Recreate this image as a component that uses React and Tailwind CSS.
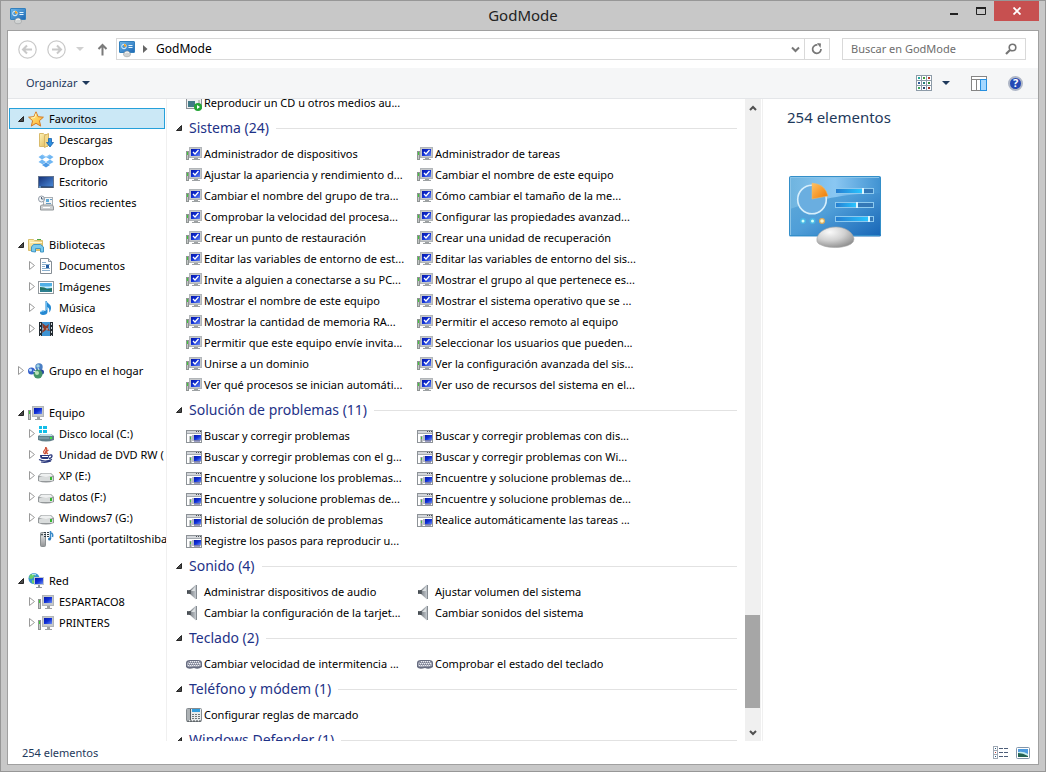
import React from "react";

function ControlPanelIcon() {
  return (
    <svg width="18" height="18" viewBox="0 0 18 18" aria-hidden="true">
      <defs>
        <linearGradient id="cp" x1="0" y1="0" x2="1" y2="1">
          <stop offset="0" stopColor="#6db7ea" />
          <stop offset="1" stopColor="#1d68b4" />
        </linearGradient>
      </defs>
      <rect x="1.5" y="1.5" width="15" height="11" rx="0.5" fill="url(#cp)" stroke="#3380bd" />
      <circle cx="6" cy="6.5" r="2.3" fill="#4e9bd8" stroke="#e3f3fd" />
      <path d="M6 6.5V4a2.500 2.500 0 0 1 2.500 2.500z" fill="#f5a11f" />
      <path d="M10.500 5.500h4M10.500 7.500h4" stroke="#e3f5ff" />
      <path d="M5.500 14.500c0-4.500 7-4.500 7 0c0 3-7 3-7 0z" fill="#cfd2d2" stroke="#989c9e" strokeWidth=".6" />
      <path d="M7 13.200c1-1.500 3-1.500 4-.5" stroke="#fff" fill="none" />
    </svg>
  );
}

function Svg({ children }) {
  return (
    <svg width="16" height="16" viewBox="0 0 16 16" className="shrink-0" aria-hidden="true">
      <defs>
        <linearGradient id="screen" x1="0" y1="0" x2="1" y2="1">
          <stop offset="0" stopColor="#0718a8" />
          <stop offset=".5" stopColor="#1030d8" />
          <stop offset="1" stopColor="#6d8cf0" />
        </linearGradient>
        <linearGradient id="metal" x1="0" y1="0" x2="0" y2="1">
          <stop offset="0" stopColor="#f1f1f1" />
          <stop offset="1" stopColor="#929496" />
        </linearGradient>
        <linearGradient id="cone" x1="0" y1="0" x2="1" y2="0">
          <stop offset="0" stopColor="#555b61" />
          <stop offset="1" stopColor="#c5cacf" />
        </linearGradient>
        <linearGradient id="folder" x1="0" y1="0" x2="1" y2="1">
          <stop offset="0" stopColor="#fff3b8" />
          <stop offset="1" stopColor="#dfb755" />
        </linearGradient>
        <linearGradient id="starfill" x1="0" y1="0" x2="1" y2="1">
          <stop offset="0" stopColor="#fff799" />
          <stop offset="1" stopColor="#ffab25" />
        </linearGradient>
        <linearGradient id="desk" x1="0" y1="0" x2="1" y2="1">
          <stop offset="0" stopColor="#142f76" />
          <stop offset="1" stopColor="#4c8edd" />
        </linearGradient>
      </defs>
      {children}
    </svg>
  );
}

function Computer() {
  return (
    <Svg>
      <rect x=".5" y="5.500" width="2" height="9" fill="#c3c7c6" stroke="#8f9493" />
      <path d="M1.500 6v3" stroke="#42c93c" />
      <rect x="4.500" y="1.500" width="11" height="10" fill="#c6c9cb" stroke="#b1b5b8" />
      <rect x="6" y="3" width="8" height="6" fill="url(#screen)" />
      <path d="M9 12h3v2h2v1H7v-1h2z" fill="#9da1a3" />
    </Svg>
  );
}

function SystemIcon() {
  return (
    <Svg>
      <rect x=".5" y="5.500" width="2" height="8" fill="#c3c7c6" stroke="#8f9493" />
      <path d="M1.500 6v3" stroke="#42c93c" />
      <rect x="3.500" y="1.500" width="12" height="10" fill="#c6c9cb" stroke="#b1b5b8" />
      <rect x="5" y="3" width="9" height="7" fill="url(#screen)" />
      <path d="M7 6l2 2 3.500-4" stroke="#fff" strokeWidth="1.300" fill="none" />
      <path d="M8 12h4v1h2v1H6v-1h2z" fill="#9da1a3" />
    </Svg>
  );
}

function TroubleIcon() {
  return (
    <Svg>
      <rect x=".5" y="2.500" width="15" height="12" fill="#fff" stroke="#8d9297" />
      <path d="M1 4h14" stroke="#d3d6da" strokeWidth="2" />
      <path d="M1 5.500h14" stroke="#a5aab0" />
      <path d="M10 3.500h1M12 3.500h1M14 3.500h1" stroke="#4b5057" />
      <path d="M4.500 8v6" stroke="#8d9395" strokeWidth="2" />
      <path d="M4.500 9v2" stroke="#43ba3f" />
      <rect x="6" y="7" width="9" height="6" fill="#b5bac5" />
      <rect x="8" y="7" width="7" height="5" fill="url(#screen)" />
      <path d="M8 13h6" stroke="#3b418d" />
    </Svg>
  );
}

function AutoplayIcon() {
  return (
    <Svg>
      <rect x=".5" y="1.500" width="15" height="12" fill="#eef0f1" stroke="#8d9297" />
      <rect x="2" y="6" width="7" height="6" fill="#417987" />
      <path d="M12 6h2M12 8h2" stroke="#999" />
      <circle cx="12" cy="12" r="4" fill="#24a536" />
      <path d="M11 10l3 2-3 2z" fill="#fff" />
    </Svg>
  );
}

function SpeakerIcon() {
  return (
    <Svg>
      <path d="M1 6h3l6-5.500v15L4 10H1z" fill="url(#cone)" />
      <path d="M10.500 1v14" stroke="#858b91" />
      <path d="M2 7v2M4 6v4" stroke="#30363c" />
      <path d="M5 7l4-4v4z" fill="#dce0e2" />
    </Svg>
  );
}

function KeyboardIcon() {
  return (
    <Svg>
      <path d="M0 7q0-3 4-3h8q4 0 4 3v4q-4 3-8 1q-6 2-8-1z" fill="#666c80" />
      <path d="M1 7q1-2 4-2h6q3 0 4 2v3q-4 1-7 .5q-5 1-7-.5z" fill="#a6a9b7" />
      <path d="M4 5.500h9M3 7.500h11M2 9.500h12" stroke="#eceef3" strokeDasharray="1 1" />
      <path d="M3 6.500h10M2 8.500h12" stroke="#777c90" strokeDasharray="1 1" />
    </Svg>
  );
}

function PhoneIcon() {
  return (
    <Svg>
      <rect x=".5" y="1.500" width="15" height="13" rx="1" fill="#e8ebec" stroke="#858b8f" />
      <rect x="1" y="2" width="3" height="11" fill="#adb2b5" />
      <path d="M4.500 2v11" stroke="#555b60" />
      <rect x="6" y="2" width="8" height="3" fill="#319ddd" />
      <path d="M6 7.500h8M6 9.500h8M6 11.500h8" stroke="#6f777c" strokeDasharray="2 1" />
      <path d="M1 14h14" stroke="#3e4549" strokeDasharray="2 1" />
    </Svg>
  );
}

function Star() {
  return (
    <Svg>
      <path d="M8 .8l2.100 4.900 5.300.5-4 3.500 1.300 5.400L8 12.300l-4.700 2.800 1.300-5.400-4-3.500 5.300-.5z" fill="url(#starfill)" stroke="#d47a25" strokeLinejoin="round" />
      <path d="M8 2.500L6.700 6.500l-3.500.5" stroke="#fff8bc" fill="none" />
    </Svg>
  );
}

function Downloads() {
  return (
    <Svg>
      <path d="M1.500 1.500h4l1 1h3v12h-8z" fill="url(#folder)" stroke="#d9bb6c" />
      <path d="M6.500 3.500l4-2v12l-4 2z" fill="#f3d98a" stroke="#d6b565" />
      <path d="M10.500 6.500h3v4h2l-3.500 4.500-3.500-4.500h2z" fill="#2c8fe0" stroke="#1861ad" strokeWidth=".8" />
    </Svg>
  );
}

function Dropbox() {
  return (
    <Svg>
      <path d="M4.500 1.500L8 4 4 6.500.5 4zM11.500 1.500L15.500 4 12 6.500 8 4zM4 6.500L8 9l-3.500 2.300L.5 9zM12 6.500L15.500 9l-4 2.300L8 9z" fill="#6fb6f3" />
      <path d="M4.500 2.500l3.500 1.500M11.500 2.500L8 4" stroke="#9bd1fb" />
      <path d="M4 12l4-2.500 4 2.500-4 2.500z" fill="#4c9ae5" />
    </Svg>
  );
}

function Desktop() {
  return (
    <Svg>
      <rect x=".5" y="2.500" width="15" height="11" fill="url(#desk)" stroke="#63748f" />
      <path d="M1 13h14" stroke="#22354f" />
      <path d="M1 13h2" stroke="#80c9ff" />
    </Svg>
  );
}

function Recent() {
  return (
    <Svg>
      <rect x="5.500" y="2.500" width="9" height="9" fill="#f3f5f6" stroke="#a9afb4" />
      <rect x="8" y="4" width="3" height="3" fill="#5aaada" />
      <path d="M8 8.500h5M12 4.500h2" stroke="#669bc0" />
      <path d="M2.500 11l1-1h11l1 2v3h-13z" fill="#cdd0d2" stroke="#92979a" />
      <path d="M5 12.500h7" stroke="#fff" />
      <circle cx="3.500" cy="4" r="3" fill="#f2f4f6" stroke="#949da7" />
      <path d="M3.500 2v2h2" stroke="#536578" fill="none" />
    </Svg>
  );
}

function Libraries() {
  return (
    <Svg>
      <path d="M.5 2.500h5l1 1h8v10h-14z" fill="url(#folder)" stroke="#d8bd6b" />
      <path d="M9 2.500h4" stroke="#52a745" />
      <path d="M2 5.500h12" stroke="#fff7d1" />
      <path d="M3.500 14.500V10l2-2.500h7l3 2.500v5h-3v-3.500h-5v3.500z" fill="#79c9ed" stroke="#4096c4" />
    </Svg>
  );
}

function Documents() {
  return (
    <Svg>
      <path d="M2.500.5h8l3 3v12h-11z" fill="#fff" stroke="#858d94" />
      <path d="M10.500.5v3h3" fill="#dfe4e9" stroke="#8b949b" />
      <path d="M4 4.500h4M4 6.500h8M4 10.500h8M4 12.500h8M4 8.500h3" stroke="#8ab0ce" />
      <rect x="8" y="7" width="3" height="3" fill="#235aa0" />
    </Svg>
  );
}

function Pictures() {
  return (
    <Svg>
      <rect x=".5" y="2.500" width="15" height="12" fill="#fff" stroke="#92999e" />
      <rect x="2" y="4" width="12" height="9" fill="#52b0e6" />
      <path d="M2 7q6 1 12 0v2H2z" fill="#c9effb" />
      <path d="M2 8q5 0 7 2l5-1v4H2z" fill="#267260" />
      <path d="M2 11q6-1 12 1v1H2z" fill="#2c7f8f" />
    </Svg>
  );
}

function Music() {
  return (
    <Svg>
      <path d="M8.500 1c1 3 5 3 4.500 7.500-.2 2-1 3-2 4 1-3-.5-5-1.500-5.500v5c0 2-2 3-4.500 3-4 0-4-4 0-4.500q1.500-.2 2.500.5V1z" fill="#2589d2" />
      <path d="M3 12q1-1.500 3-1" stroke="#8bd3ff" fill="none" />
      <path d="M8.500 2v8" stroke="#69bdf2" />
    </Svg>
  );
}

function Videos() {
  return (
    <Svg>
      <rect x="1" y="1" width="14" height="14" fill="#222a31" />
      <rect x="4" y="1" width="8" height="14" fill="#3e93d2" />
      <path d="M4 2l4 3 3-2-1 4 2 3-4-1-4 3 1-5z" fill="#8d3b29" />
      <path d="M4 8h8M2.500 2v13M13.500 2v13" stroke="#ced5d9" strokeDasharray="2 2" />
    </Svg>
  );
}

function Homegroup() {
  return (
    <Svg>
      <circle cx="11" cy="4" r="3.700" fill="#4a7fc4" />
      <circle cx="3.500" cy="8" r="3.500" fill="#355fca" />
      <circle cx="13.500" cy="9" r="2.500" fill="#294ba0" />
      <circle cx="10" cy="11" r="4.500" fill="#459568" />
      <circle cx="10" cy="3" r="1.700" fill="#9fd5e5" />
      <circle cx="2.500" cy="7" r="1.500" fill="#bddfff" />
      <circle cx="9" cy="10" r="2" fill="#bbe3b6" />
      <path d="M5 8l3 1M10 5l1 2" stroke="#dae8f0" />
    </Svg>
  );
}

function Drive() {
  return (
    <Svg>
      <path d="M3 5h10l3 3v5q-8 3-16 0V8z" fill="#939799" />
      <path d="M3.500 5.500h9l2.500 2.500q-7 2-14 0z" fill="#eef0f0" />
      <rect x="1" y="9" width="14" height="4" rx="1" fill="#d9dcdc" />
      <rect x="12" y="9" width="2" height="3" fill="#35b831" />
    </Svg>
  );
}

function SystemDrive() {
  return (
    <Svg>
      <path d="M3 8h10l3 2v4q-8 3-16 0v-4z" fill="#617f8a" />
      <path d="M3 8h10l2 2H1z" fill="#bfdae3" />
      <path d="M1 12h10" stroke="#94b2bd" />
      <path d="M1 0h3v3H1zM5 0h4v3H5zM1 4h3v3H1zM5 4h4v3H5z" fill="#13bde8" />
      <rect x="12" y="11" width="2" height="2" fill="#3ce542" />
    </Svg>
  );
}

function Java() {
  return (
    <Svg>
      <path d="M7 7C3 4 9 3 7.500 0c4 3-2 4 .5 7M10 7C7 5 9 4 10.500 3" stroke="#cd5036" strokeWidth="1.200" fill="none" />
      <path d="M2 8h9c0 4-1 4-2 4H5C3 12 2 11 2 8z" fill="#29377c" />
      <path d="M11 8.500c4-2 4 2 0 3" fill="none" stroke="#29377c" strokeWidth="1.300" />
      <path d="M4 9.500h6" stroke="#fff" />
      <path d="M1 12.500q6 3 13 0M3 15q5 1 10-1" fill="none" stroke="#29377c" strokeWidth="1.200" />
    </Svg>
  );
}

function MediaDevice() {
  return (
    <Svg>
      <rect x="2.500" y="1.500" width="5" height="14" rx="1" fill="url(#metal)" stroke="#8b9092" />
      <circle cx="4" cy="3.500" r="1" fill="#3f494d" />
      <path d="M6 1.500h6M6 3.500h6M6 5.500h6" stroke="#303b44" strokeDasharray="2 1" />
      <path d="M12.500 0v8M12.500 2q3 0 2 4" stroke="#388ac9" strokeWidth="1.500" fill="none" />
      <circle cx="11.500" cy="8" r="1.500" fill="#2878b5" />
    </Svg>
  );
}

function Network() {
  return (
    <Svg>
      <circle cx="6" cy="5.500" r="5.500" fill="#3794d0" />
      <path d="M2 2q3-2 5 0L5 5 3 6 1 5zM4 7l4 1-1 3-3-1z" fill="#6ad066" />
      <path d="M4 2q2-2 4 0" stroke="#cdf2fb" fill="none" />
      <rect x="6" y="4" width="10" height="8" fill="#c0c7ce" />
      <rect x="7" y="5" width="8" height="6" fill="url(#screen)" />
      <path d="M10 12h2v2h2v1H8v-1h2z" fill="#8f979d" />
    </Svg>
  );
}

const tree = [
  {
    label: "Favoritos", icon: Star, open: true, selected: true,
    children: [
      { label: "Descargas", icon: Downloads },
      { label: "Dropbox", icon: Dropbox },
      { label: "Escritorio", icon: Desktop },
      { label: "Sitios recientes", icon: Recent },
    ],
  },
  {
    label: "Bibliotecas", icon: Libraries, open: true,
    children: [
      { label: "Documentos", icon: Documents, more: true },
      { label: "Imágenes", icon: Pictures, more: true },
      { label: "Música", icon: Music, more: true },
      { label: "Vídeos", icon: Videos, more: true },
    ],
  },
  { label: "Grupo en el hogar", icon: Homegroup, children: [] },
  {
    label: "Equipo", icon: Computer, open: true,
    children: [
      { label: "Disco local (C:)", icon: SystemDrive, more: true },
      { label: "Unidad de DVD RW (", icon: Java, more: true },
      { label: "XP (E:)", icon: Drive, more: true },
      { label: "datos (F:)", icon: Drive, more: true },
      { label: "Windows7 (G:)", icon: Drive, more: true },
      { label: "Santi (portatiltoshiba", icon: MediaDevice },
    ],
  },
  {
    label: "Red", icon: Network, open: true,
    children: [
      { label: "ESPARTACO8", icon: Computer, more: true },
      { label: "PRINTERS", icon: Computer, more: true },
    ],
  },
];

const groups = [
  {
    title: "Sistema (24)", icon: SystemIcon,
    items: [
      "Administrador de dispositivos", "Administrador de tareas",
      "Ajustar la apariencia y rendimiento d...", "Cambiar el nombre de este equipo",
      "Cambiar el nombre del grupo de tra...", "Cómo cambiar el tamaño de la me...",
      "Comprobar la velocidad del procesa...", "Configurar las propiedades avanzad...",
      "Crear un punto de restauración", "Crear una unidad de recuperación",
      "Editar las variables de entorno de est...", "Editar las variables de entorno del sis...",
      "Invite a alguien a conectarse a su PC...", "Mostrar el grupo al que pertenece es...",
      "Mostrar el nombre de este equipo", "Mostrar el sistema operativo que se ...",
      "Mostrar la cantidad de memoria RA...", "Permitir el acceso remoto al equipo",
      "Permitir que este equipo envíe invita...", "Seleccionar los usuarios que pueden...",
      "Unirse a un dominio", "Ver la configuración avanzada del sis...",
      "Ver qué procesos se inician automáti...", "Ver uso de recursos del sistema en el...",
    ],
  },
  {
    title: "Solución de problemas (11)", icon: TroubleIcon,
    items: [
      "Buscar y corregir problemas", "Buscar y corregir problemas con dis...",
      "Buscar y corregir problemas con el g...", "Buscar y corregir problemas con Wi...",
      "Encuentre y solucione los problemas...", "Encuentre y solucione problemas de...",
      "Encuentre y solucione problemas de...", "Encuentre y solucione problemas de...",
      "Historial de solución de problemas", "Realice automáticamente las tareas ...",
      "Registre los pasos para reproducir u...",
    ],
  },
  {
    title: "Sonido (4)", icon: SpeakerIcon,
    items: [
      "Administrar dispositivos de audio", "Ajustar volumen del sistema",
      "Cambiar la configuración de la tarjet...", "Cambiar sonidos del sistema",
    ],
  },
  {
    title: "Teclado (2)", icon: KeyboardIcon,
    items: ["Cambiar velocidad de intermitencia ...", "Comprobar el estado del teclado"],
  },
  { title: "Teléfono y módem (1)", icon: PhoneIcon, items: ["Configurar reglas de marcado"] },
  { title: "Windows Defender (1)", icon: SystemIcon, items: [] },
];

function OpenArrow() {
  return (
    <svg width="6" height="6" viewBox="0 0 6 6" className="shrink-0" aria-hidden="true">
      <path d="M5.500.5v5h-5z" fill="#4b4b4b" stroke="#262626" />
    </svg>
  );
}

function ClosedArrow() {
  return (
    <svg width="6" height="9" viewBox="0 0 6 9" className="shrink-0" aria-hidden="true">
      <path d="M.5.500l5 4-5 4z" fill="#fff" stroke="#9a9a9a" />
    </svg>
  );
}

function Sidebar() {
  return (
    <nav aria-label="Panel de navegación" className="w-[159px] shrink-0 overflow-hidden border-r border-[#f0f0f0] pt-[9px] pr-px pl-px">
      <ul className="flex flex-col gap-[21px]">
        {tree.map(({ label, icon: Icon, open, selected, children }) => (
          <li key={label}>
            <button
              className={
                "flex h-[21px] w-full items-center whitespace-nowrap border pl-2 " +
                (selected ? "border-[#26a0da] bg-[#cbe8f6]" : "border-transparent")
              }
            >
              <span className="flex w-[10px] shrink-0">{open ? <OpenArrow /> : <ClosedArrow />}</span>
              <Icon />
              <span className="pl-[5px]">{label}</span>
            </button>
            <ul>
              {children.map(({ label: name, icon: Sub, more }) => (
                <li key={name}>
                  <button className="flex h-[21px] w-full items-center whitespace-nowrap pl-5">
                    <span className="flex w-[9px] shrink-0">{more && <ClosedArrow />}</span>
                    <Sub />
                    <span className="pl-[5px]">{name}</span>
                  </button>
                </li>
              ))}
            </ul>
          </li>
        ))}
      </ul>
    </nav>
  );
}

function Items({ items, icon: Icon }) {
  return (
    <ul className="grid grid-cols-[231px_231px] pl-[19px]">
      {items.map((item, i) => (
        <li key={i}>
          <button className="flex h-[21px] items-center gap-[2px] whitespace-nowrap">
            <Icon />
            <span>{item}</span>
          </button>
        </li>
      ))}
    </ul>
  );
}

function Scrollbar() {
  return (
    <div className="flex w-4 shrink-0 flex-col bg-[#f0f0f0]">
      <button aria-label="Subir" className="flex h-[17px] shrink-0 items-center justify-center">
        <svg width="8" height="6" viewBox="0 0 8 6"><path d="M1 5l3-3 3 3" fill="none" stroke="#505050" strokeWidth="2" /></svg>
      </button>
      <div className="flex-1" />
      <div className="mr-px h-[93px] shrink-0 bg-[#a6a6a6]" />
      <div className="h-4 shrink-0" />
      <button aria-label="Bajar" className="flex h-[17px] shrink-0 items-center justify-center">
        <svg width="8" height="6" viewBox="0 0 8 6"><path d="M1 1l3 3 3-3" fill="none" stroke="#505050" strokeWidth="2" /></svg>
      </button>
    </div>
  );
}

function LargeControlPanel() {
  return (
    <svg width="96" height="76" viewBox="0 0 96 76" role="img" aria-label="GodMode">
      <defs>
        <linearGradient id="panel" x1="0" y1="0" x2="1" y2="1">
          <stop offset="0" stopColor="#64add9" />
          <stop offset=".5" stopColor="#4f9ed8" />
          <stop offset="1" stopColor="#1765b6" />
        </linearGradient>
        <linearGradient id="glare" x1="0" y1="0" x2="1" y2="0">
          <stop offset="0" stopColor="#6fb4df" />
          <stop offset=".5" stopColor="#8ac7f2" />
          <stop offset="1" stopColor="#4193d2" />
        </linearGradient>
        <linearGradient id="bar" x1="0" y1="0" x2="1" y2="0">
          <stop offset="0" stopColor="#267ed1" />
          <stop offset="1" stopColor="#28c4ff" />
        </linearGradient>
        <linearGradient id="wedge" x1="0" y1="0" x2="1" y2="1">
          <stop offset="0" stopColor="#ffc263" />
          <stop offset="1" stopColor="#ed7800" />
        </linearGradient>
        <radialGradient id="ball" cx=".35" cy=".25" r=".8">
          <stop offset="0" stopColor="#fafafa" />
          <stop offset=".5" stopColor="#d2d2d2" />
          <stop offset="1" stopColor="#8d8d8d" />
        </radialGradient>
      </defs>
      <rect x="2" y="2.500" width="92" height="60" rx="1.500" fill="url(#panel)" />
      <path d="M3 3h90v16C60 20 40 23 3 35z" fill="url(#glare)" />
      <rect x="2.500" y="2.500" width="91" height="59" rx="1" fill="none" stroke="#348fc9" />
      <path d="M3.500 61V3.500H92" fill="none" stroke="#8ac4e8" />
      <circle cx="25" cy="25.500" r="14.300" fill="#6aaee0" stroke="#d7effc" strokeWidth="1.600" />
      <path d="M25 25V9q13 1 16 13z" fill="url(#wedge)" stroke="#e9bd77" strokeWidth=".5" />
      {[[14, 26, 27], [28, 20, 21], [42, 32, 33]].map(([y, width, mark]) => (
        <g key={y}>
          <rect x="48.500" y={y + 0.5} width="38" height="5" fill="#3478b7" stroke="#8dc9ee" />
          <rect x="49" y={y + 1} width={width} height="4" fill="url(#bar)" />
          <rect x={48 + mark} y={y} width="2" height="6" fill="#dcf6ff" />
        </g>
      ))}
      <circle cx="16" cy="47" r="3" fill="#48b7e5" /><circle cx="16" cy="47" r="1.500" fill="#d2fff8" />
      <circle cx="25.500" cy="47" r="3" fill="#48b7e5" /><circle cx="25.500" cy="47" r="1.500" fill="#d2fff8" />
      <circle cx="35" cy="47" r="3" fill="#e0ab58" /><circle cx="35" cy="47" r="1.800" fill="#fff5c7" />
      <path d="M30 64C32 57 40 53 49 53s17 5 18 12q0 6-12 8q-14 2-23-3q-3-2-2-6z" fill="url(#ball)" stroke="#aaa" strokeWidth=".6" />
    </svg>
  );
}

export default function App() {
  return (
    <div className="flex h-screen flex-col overflow-hidden border border-[#979797] bg-[#c8c8c8] px-1.5 pb-1.5 font-['Noto_Sans','Open_Sans',sans-serif] text-[11px] leading-4 text-black">
      <header className="grid h-[29px] shrink-0 grid-cols-[1fr_auto_1fr] items-center">
        <span className="pl-0.5"><ControlPanelIcon /></span>
        <h1 className="pb-0.5 text-[15px] leading-5 text-[#222]">GodMode</h1>
        <div className="flex h-full items-start justify-end">
          <button aria-label="Minimizar" className="flex h-5 w-[26px] items-center justify-center">
            <svg width="8" height="10" viewBox="0 0 8 10"><path d="M0 8h8" stroke="#222" strokeWidth="2" /></svg>
          </button>
          <button aria-label="Maximizar" className="flex h-5 w-[27px] items-center justify-center">
            <svg width="10" height="8" viewBox="0 0 10 8"><path d="M.5 1v6.500h9V1z" fill="none" stroke="#222" /><path d="M0 1h10" stroke="#222" strokeWidth="2" /></svg>
          </button>
          <button aria-label="Cerrar" className="flex h-5 w-[45px] items-center justify-center bg-[#c75050]">
            <svg width="8" height="8" viewBox="0 0 8 8"><path d="M.5.5l7 7M7.500.5l-7 7" stroke="#fff" strokeWidth="1.800" /></svg>
          </button>
        </div>
      </header>

      <div className="flex min-h-0 flex-1 flex-col border border-[#a0a0a0] bg-white">
        <div className="flex h-[37px] shrink-0 items-center pr-3 pb-px pl-[10px]">
          <button aria-label="Atrás">
            <svg width="19" height="19" viewBox="0 0 19 19" fill="none" stroke="#c9c9c9"><circle cx="9.500" cy="9.500" r="8.700" strokeWidth="1.200" /><path d="M14 9.500H5.500M9 5.500l-4 4 4 4" strokeWidth="2" /></svg>
          </button>
          <button aria-label="Adelante" className="ml-[10px]">
            <svg width="19" height="19" viewBox="0 0 19 19" fill="none" stroke="#c9c9c9"><circle cx="9.500" cy="9.500" r="8.700" strokeWidth="1.200" /><path d="M5 9.500h8.500M10 5.500l4 4-4 4" strokeWidth="2" /></svg>
          </button>
          <button aria-label="Ubicaciones recientes" className="ml-[10px]">
            <svg width="8" height="4" viewBox="0 0 8 4"><path d="M0 0h8L4 4z" fill="#d0d0d0" /></svg>
          </button>
          <button aria-label="Subir un nivel" className="mr-2 ml-[13px]">
            <svg width="11" height="13" viewBox="0 0 11 13"><path d="M5.500 12.500V2M1.500 6l4-4 4 4" stroke="#7a7a7a" strokeWidth="2" fill="none" /></svg>
          </button>
          <div className="flex h-[22px] flex-1 items-center border border-[#d9d9d9]">
            <span className="pl-px"><ControlPanelIcon /></span>
            <svg width="5" height="8" viewBox="0 0 5 8" className="ml-[7px]" aria-hidden="true"><path d="M0 0l4.500 4L0 8z" fill="#666" /></svg>
            <button className="flex-1 pl-2 text-left text-[12px]">GodMode</button>
            <button aria-label="Ubicaciones anteriores" className="mr-1">
              <svg width="9" height="7" viewBox="0 0 9 7"><path d="M1 1.500l3.500 3.500L8 1.500" fill="none" stroke="#777" strokeWidth="2" /></svg>
            </button>
            <button aria-label="Actualizar" className="flex h-full w-[25px] items-center justify-center border-l border-[#d9d9d9]">
              <svg width="12" height="12" viewBox="0 0 12 12"><path d="M6.500 2A4.200 4.200 0 1 0 10 6" fill="none" stroke="#777" strokeWidth="1.700" /><path d="M6 0l4 .5L9.500 5z" fill="#777" /></svg>
            </button>
          </div>
          <label className="ml-3 flex h-[22px] w-[184px] items-center border border-[#d9d9d9] px-2">
            <input type="search" aria-label="Buscar en GodMode" placeholder="Buscar en GodMode" className="min-w-0 flex-1 bg-transparent text-[11px] outline-none placeholder:text-[#6d6d6d]" />
            <svg width="12" height="12" viewBox="0 0 12 12" aria-hidden="true"><circle cx="7.500" cy="4.500" r="3.300" fill="none" stroke="#747474" strokeWidth="1.600" /><path d="M5 7L1 11" stroke="#747474" strokeWidth="2.200" /></svg>
          </label>
        </div>

        <div className="flex h-[31px] shrink-0 items-center border-b border-[#e4e6e9] bg-[#f5f6f7] pr-[15px] pl-[18px]">
          <button className="flex items-center gap-[5px] text-[#1e395b]">
            Organizar
            <svg width="8" height="4" viewBox="0 0 8 4" aria-hidden="true"><path d="M0 0h8L4 4z" fill="#1e395b" /></svg>
          </button>
          <div className="flex-1" />
          <button aria-label="Cambiar la vista">
            <svg width="16" height="16" viewBox="0 0 16 16">
              {[0, 1, 2].map((r) => [0, 1, 2].map((c) => (
                <g key={r + "-" + c}>
                  <rect x={c * 5 + 0.5} y={r * 5 + 0.5} width="5" height="5" fill="#fff" stroke="#8d9ba8" />
                  <rect x={c * 5 + 2} y={r * 5 + 2} width="2" height="2" fill={[["#22a59a", "#3f9c38", "#b0392b"], ["#315c98", "#267d75", "#2f8a36"], ["#3aa457", "#27446b", "#9b2d20"]][r][c]} />
                </g>
              )))}
            </svg>
          </button>
          <button aria-label="Más opciones" className="ml-[10px]">
            <svg width="8" height="4" viewBox="0 0 8 4"><path d="M0 0h8L4 4z" fill="#1e395b" /></svg>
          </button>
          <button aria-label="Panel de detalles" className="ml-[21px]">
            <svg width="16" height="15" viewBox="0 0 16 15"><rect x=".5" y=".5" width="15" height="14" fill="#fff" stroke="#858585" /><path d="M1 3.500h14M5.500 4v10" stroke="#858585" /><rect x="9.500" y="3.500" width="6" height="11" fill="#a4d7ff" stroke="#268fdf" /></svg>
          </button>
          <button aria-label="Ayuda" className="ml-[21px] flex h-[15px] w-[15px] items-center justify-center rounded-full border-2 border-[#aeb6c6] bg-[#2449b5] text-[11px] leading-3 font-bold text-white">?</button>
        </div>

        <div className="flex min-h-0 flex-1">
          <Sidebar />
          <main className="min-w-0 flex-1 overflow-hidden">
            <div className="-mt-[7px]">
              <Items items={["Reproducir un CD u otros medios au..."]} icon={AutoplayIcon} />
              {groups.map((group) => (
                <section key={group.title}>
                  <div className="flex h-[30px] items-center gap-[7px] pr-2 pl-[9px]">
                    <OpenArrow />
                    <h2 className="text-[14px] leading-5 whitespace-nowrap text-[#1e3287]">{group.title}</h2>
                    <hr className="flex-1 border-[#e2e2e2]" />
                  </div>
                  <Items items={group.items} icon={group.icon} />
                </section>
              ))}
            </div>
          </main>
          <Scrollbar />
          <aside className="ml-px w-[276px] shrink-0 border-l border-[#f0f0f0] pt-2 pl-6">
            <p className="text-[15px] leading-5 text-[#1e395b]">254 elementos</p>
            <div className="pt-[47px]"><LargeControlPanel /></div>
          </aside>
        </div>

        <footer className="flex h-[23px] shrink-0 items-center gap-2 pr-2 pl-[14px] text-[#1e395b]">
          <span className="flex-1">254 elementos</span>
          <button aria-label="Detalles">
            <svg width="15" height="13" viewBox="0 0 15 13">
              {[0, 4, 8].map((y) => (
                <g key={y}>
                  <rect x=".5" y={y + 0.5} width="4" height="4" fill="#fff" stroke="#a0a9b4" />
                  <rect x="2" y={y + 2} width="1" height="1" fill={y === 4 ? "#c2382e" : "#26587e"} />
                  <path d={`M6 ${y + 2.5}h4M11 ${y + 2.5}h4`} stroke="#4d5e79" />
                </g>
              ))}
            </svg>
          </button>
          <button aria-label="Iconos grandes">
            <svg width="14" height="12" viewBox="0 0 14 12"><rect x=".5" y=".5" width="13" height="11" rx="1" fill="#fff" stroke="#8195aa" /><rect x="2" y="2" width="10" height="8" fill="#4d9be0" /><path d="M2 5q5-1 10 2v3H2z" fill="#c5ecef" /><path d="M2 6q5 0 10 3v1H2z" fill="#246353" /></svg>
          </button>
        </footer>
      </div>
    </div>
  );
}
